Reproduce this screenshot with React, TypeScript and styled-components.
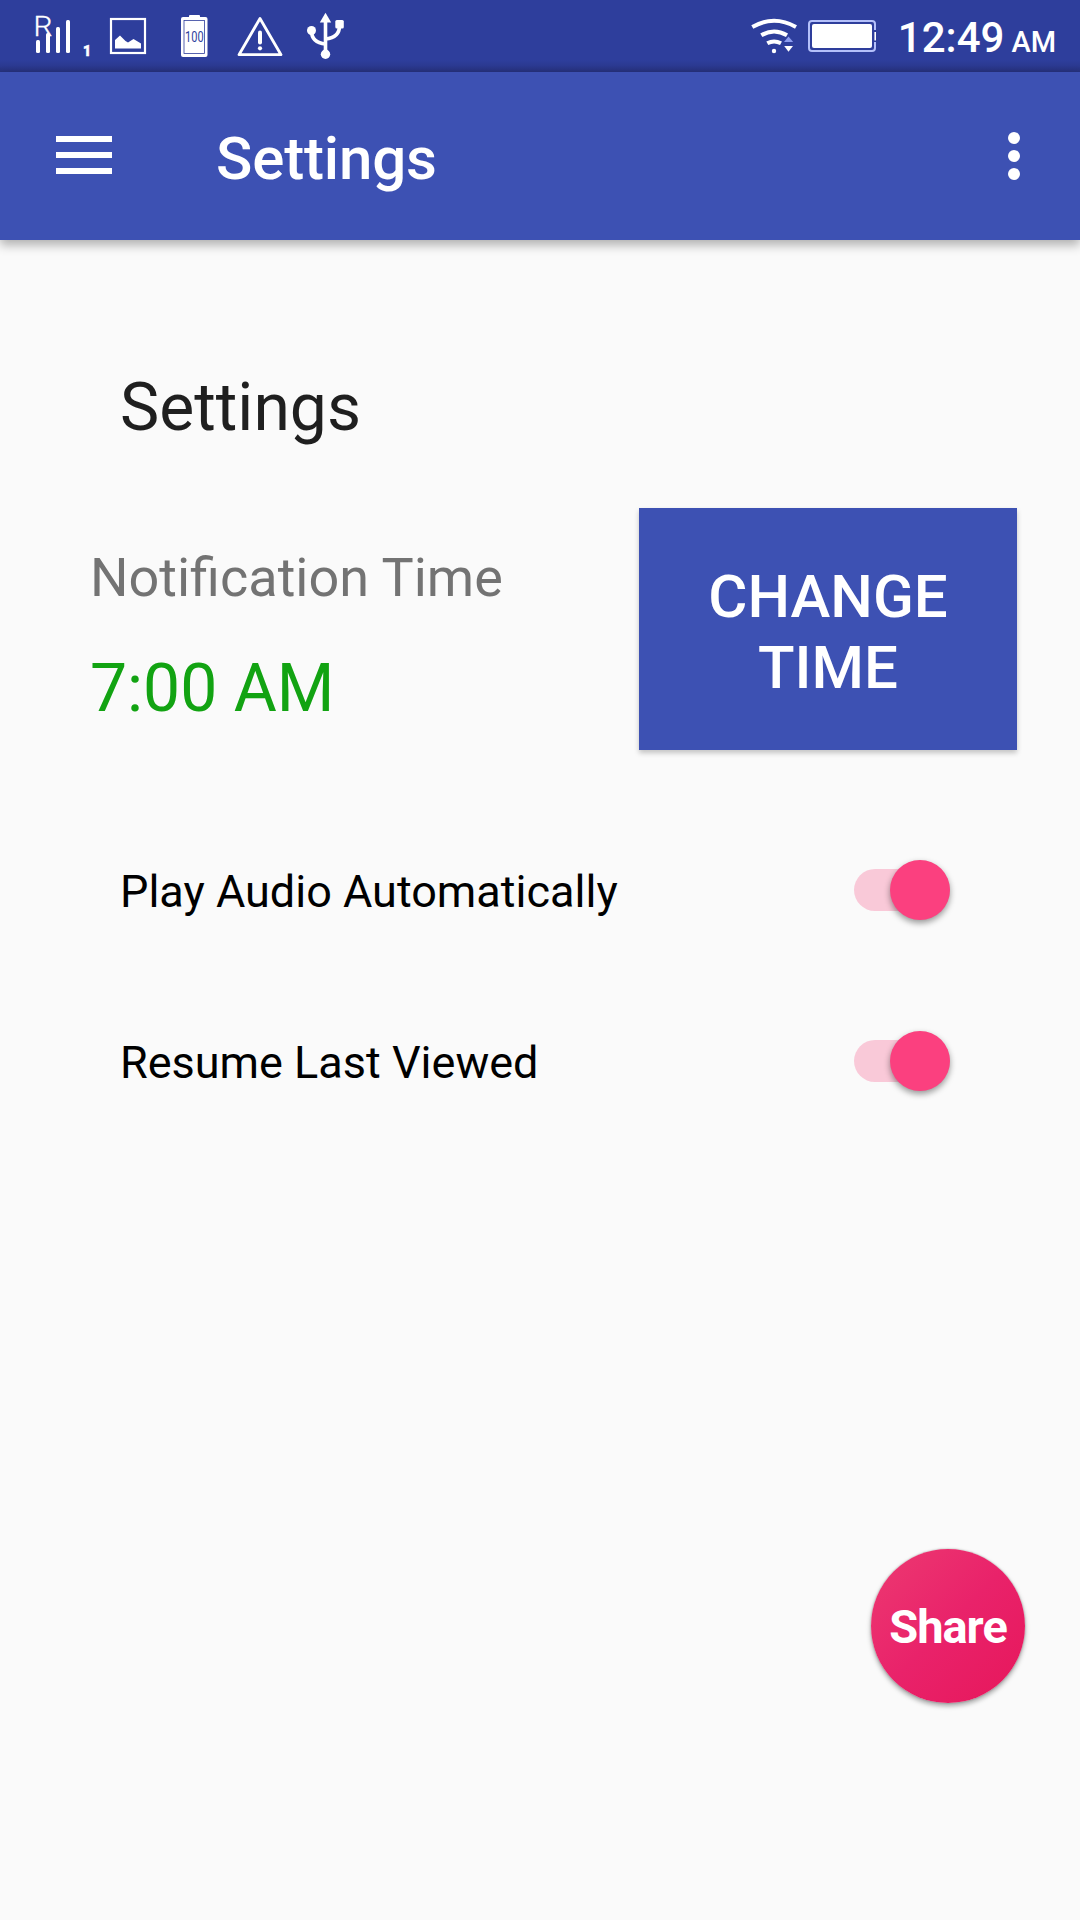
import React, { useState } from "react";
import styled, { createGlobalStyle } from "styled-components";

const GlobalStyle = createGlobalStyle`
  * { box-sizing: border-box; }
  body { margin: 0; background: #fafafa; font-family: Roboto, sans-serif; }
  button { font-family: inherit; border: 0; padding: 0; }
`;

const Screen = styled.div`
  position: relative;
  width: 1080px;
  height: 1920px;
  overflow: hidden;
  display: flex;
  flex-direction: column;
  background: #fafafa;
`;

const StatusBar = styled.div`
  height: 72px;
  flex: none;
  display: flex;
  justify-content: space-between;
  padding: 0 24px 0 34px;
  background: linear-gradient(#2e3e9c 0, #2e3e9c 60px, #2b3990 66px, #26317c 72px);
`;

const StatusGroup = styled.div`
  display: flex;
  height: 72px;
`;

const StatusIcon = styled.svg<{ $gap?: number }>`
  display: block;
  flex: none;
  height: 72px;
  overflow: visible;
  margin-right: ${(p) => p.$gap ?? 0}px;
`;

const Clock = styled.div`
  display: flex;
  align-items: baseline;
  color: #fff;
  font-size: 42px;
  font-weight: 500;
  line-height: 50px;
  padding-top: 13px;
`;

const Meridiem = styled.span`
  font-size: 29px;
  margin-left: 7px;
`;

const AppBar = styled.header`
  position: relative;
  height: 168px;
  flex: none;
  display: flex;
  align-items: center;
  padding: 0 60px 0 56px;
  background: #3d51b3;
  box-shadow: 0 5px 10px rgba(0, 0, 0, 0.3);
`;

const MenuButton = styled.button`
  width: 56px;
  display: grid;
  gap: 10px;
  background: none;
  margin-bottom: 2px;
`;

const MenuLine = styled.span`
  height: 6px;
  background: #fff;
`;

const Title = styled.h1`
  flex: 1;
  margin: 6px 0 0 104px;
  color: #fff;
  font-size: 60px;
  line-height: 70px;
  font-weight: 500;
  letter-spacing: -0.15px;
`;

const MoreButton = styled.button`
  display: grid;
  gap: 6px;
  background: none;
`;

const Dot = styled.span`
  width: 12px;
  height: 12px;
  border-radius: 50%;
  background: #fff;
`;

const Content = styled.main`
  display: flex;
  flex-direction: column;
  padding: 129px 63px 0 90px;
`;

const Heading = styled.h2`
  margin: 0 0 61px 30px;
  color: #1f1f1f;
  font-size: 66px;
  line-height: 78px;
  font-weight: 400;
`;

const TimeRow = styled.section`
  display: flex;
  justify-content: space-between;
  height: 242px;
`;

const TimeInfo = styled.div`
  display: flex;
  flex-direction: column;
  gap: 40px;
  padding-top: 38px;
`;

const TimeLabel = styled.div`
  color: #737373;
  font-size: 54px;
  line-height: 64px;
`;

const TimeValue = styled.div`
  color: #12a312;
  font-size: 66px;
  line-height: 78px;
`;

const ChangeButton = styled.button`
  width: 378px;
  height: 242px;
  padding: 6px 40px 0;
  background: #3d51b3;
  color: #fff;
  font-size: 60px;
  line-height: 71px;
  font-weight: 500;
  text-transform: uppercase;
  box-shadow: 0 3px 5px rgba(0, 0, 0, 0.22);
`;

const ToggleList = styled.section`
  margin-top: 55px;
  padding: 0 67px 0 30px;
`;

const ToggleRow = styled.label`
  height: 171px;
  display: flex;
  align-items: center;
  justify-content: space-between;
  color: #000;
`;

const ToggleText = styled.span`
  margin-top: 2px;
  font-size: 45px;
  line-height: 54px;
`;

const Track = styled.button<{ $on: boolean }>`
  width: 96px;
  height: 42px;
  margin-bottom: 2px;
  display: flex;
  align-items: center;
  justify-content: ${(p) => (p.$on ? "flex-end" : "flex-start")};
  border-radius: 21px;
  background: ${(p) => (p.$on ? "#f9c9d8" : "#b9b9b9")};
`;

const Thumb = styled.span<{ $on: boolean }>`
  width: 60px;
  height: 60px;
  flex: none;
  border-radius: 50%;
  background: ${(p) => (p.$on ? "#fb407f" : "#f1f1f1")};
  box-shadow: 0 3px 6px rgba(0, 0, 0, 0.4);
`;

const ShareButton = styled.button`
  position: absolute;
  right: 55px;
  bottom: 217px;
  width: 154px;
  height: 154px;
  border-radius: 50%;
  background: linear-gradient(135deg, #ec3570 10%, #e9226a 50%, #e7195e 90%);
  color: #fff;
  font-size: 47px;
  font-weight: 700;
  letter-spacing: -1px;
  box-shadow: 0 3px 5px rgba(0, 0, 0, 0.35), 0 0 2px rgba(0, 0, 0, 0.3);
`;

const SignalIcon = () => (
  <StatusIcon $gap={19} width="57" viewBox="34 0 57 72" fill="#fff">
    <text x="33.500" y="35.500" fontSize="27" fontWeight="300" textLength="19" lengthAdjust="spacingAndGlyphs" stroke="#fff" strokeWidth="0.300" fontFamily="Roboto, sans-serif">R</text>
    <rect x="36" y="40" width="4" height="13" rx="1.5" />
    <rect x="46" y="33" width="4" height="20" rx="1.5" />
    <rect x="56" y="27" width="4" height="26" rx="1.5" />
    <rect x="66" y="20" width="4" height="33" rx="1.5" />
    <text x="83" y="55.5" fontSize="14" fontWeight="900" stroke="#fff" strokeWidth="0.500" fontFamily="Roboto, sans-serif">1</text>
  </StatusIcon>
);

const PictureIcon = () => (
  <StatusIcon $gap={35} width="36" viewBox="110 0 36 72">
    <rect x="111" y="19" width="34" height="34" fill="none" stroke="#fff" strokeWidth="2.2" />
    <path d="M115 48.500V40L120 35.500L125.500 41L128 42.500L133.500 39L141 43.500V48.500Z" fill="#fff" />
  </StatusIcon>
);

const ChargeIcon = () => (
  <StatusIcon $gap={28} width="27" viewBox="181 0 27 72">
    <rect x="189" y="15" width="11" height="4" rx="1" fill="#fff" />
    <rect x="181" y="17" width="26.500" height="40" rx="2" fill="#fff" />
    <rect x="184" y="20.500" width="20.500" height="33" fill="none" stroke="#2e3e9c" strokeWidth="0.8" />
    <text x="194.300" y="41.700" fontSize="15" textAnchor="middle" textLength="18.500" lengthAdjust="spacingAndGlyphs" fill="#2e3e9c" fontFamily="Roboto, sans-serif">100</text>
  </StatusIcon>
);

const WarningIcon = () => (
  <StatusIcon $gap={23} width="48" viewBox="236 0 48 72">
    <path d="M260 18.500L281 54.700H239Z" fill="none" stroke="#fff" strokeWidth="2.800" strokeLinejoin="round" />
    <path d="M260 32.500V42.500" stroke="#fff" strokeWidth="4" strokeLinecap="round" />
    <circle cx="260" cy="48.300" r="2.100" fill="#fff" />
  </StatusIcon>
);

const UsbIcon = () => (
  <StatusIcon width="38" viewBox="307 0 38 72">
    <g fill="none" stroke="#fff" strokeWidth="3.600">
      <path d="M325.500 20V54" />
      <path d="M311.500 31C311.500 38 316 43 325.500 44" />
      <path d="M339.500 26C339.500 33 335 38 325.500 39" />
    </g>
    <g fill="#fff">
      <path d="M325.500 12.800L331.200 22.600H319.800Z" />
      <circle cx="311.500" cy="30.500" r="4.500" />
      <rect x="335.300" y="20" width="8.500" height="8.500" rx="1.500" />
      <circle cx="325.500" cy="54.300" r="4.700" />
    </g>
  </StatusIcon>
);

const WifiIcon = () => (
  <StatusIcon $gap={11} width="46" viewBox="751 0 46 72">
    <g fill="none" stroke="#fff" strokeWidth="4">
      <path d="M752.300 27Q774 14.500 796 27" />
      <path d="M761.300 35.300Q774 27.500 787 35.300" />
      <path d="M767.300 43.300Q774 39.500 781 43.300" />
    </g>
    <circle cx="774" cy="51" r="2.200" fill="#fff" />
    <path d="M788.500 36.500L793.200 42H784Z" fill="#8c9cf0" />
    <path d="M784.200 46H793L788.500 51.800Z" fill="#fff" />
  </StatusIcon>
);

const BatteryIcon = () => (
  <StatusIcon $gap={21} width="69" viewBox="808 0 69 72">
    <path
      d="M875 30V24Q875 21 872 21H812Q809 21 809 24V48Q809 51 812 51H872Q875 51 875 48V42"
      fill="none"
      stroke="#b4c0fa"
      strokeWidth="2"
    />
    <path d="M875.200 32V40.500" stroke="#fff" strokeWidth="1.600" />
    <rect x="812" y="24" width="60" height="24" rx="2" fill="#fff" />
  </StatusIcon>
);

interface ToggleProps {
  label: string;
}

function Toggle({ label }: ToggleProps) {
  const [on, setOn] = useState(true);
  return (
    <ToggleRow>
      <ToggleText>{label}</ToggleText>
      <Track role="switch" aria-checked={on} $on={on} onClick={() => setOn(!on)}>
        <Thumb $on={on} />
      </Track>
    </ToggleRow>
  );
}

export default function App() {
  return (
    <Screen>
      <GlobalStyle />
      <StatusBar>
        <StatusGroup>
          <SignalIcon />
          <PictureIcon />
          <ChargeIcon />
          <WarningIcon />
          <UsbIcon />
        </StatusGroup>
        <StatusGroup>
          <WifiIcon />
          <BatteryIcon />
          <Clock>
            12:49<Meridiem>AM</Meridiem>
          </Clock>
        </StatusGroup>
      </StatusBar>
      <AppBar>
        <MenuButton>
          <MenuLine />
          <MenuLine />
          <MenuLine />
        </MenuButton>
        <Title>Settings</Title>
        <MoreButton>
          <Dot />
          <Dot />
          <Dot />
        </MoreButton>
      </AppBar>
      <Content>
        <Heading>Settings</Heading>
        <TimeRow>
          <TimeInfo>
            <TimeLabel>Notification Time</TimeLabel>
            <TimeValue>7:00 AM</TimeValue>
          </TimeInfo>
          <ChangeButton>Change Time</ChangeButton>
        </TimeRow>
        <ToggleList>
          <Toggle label="Play Audio Automatically" />
          <Toggle label="Resume Last Viewed" />
        </ToggleList>
      </Content>
      <ShareButton>Share</ShareButton>
    </Screen>
  );
}
